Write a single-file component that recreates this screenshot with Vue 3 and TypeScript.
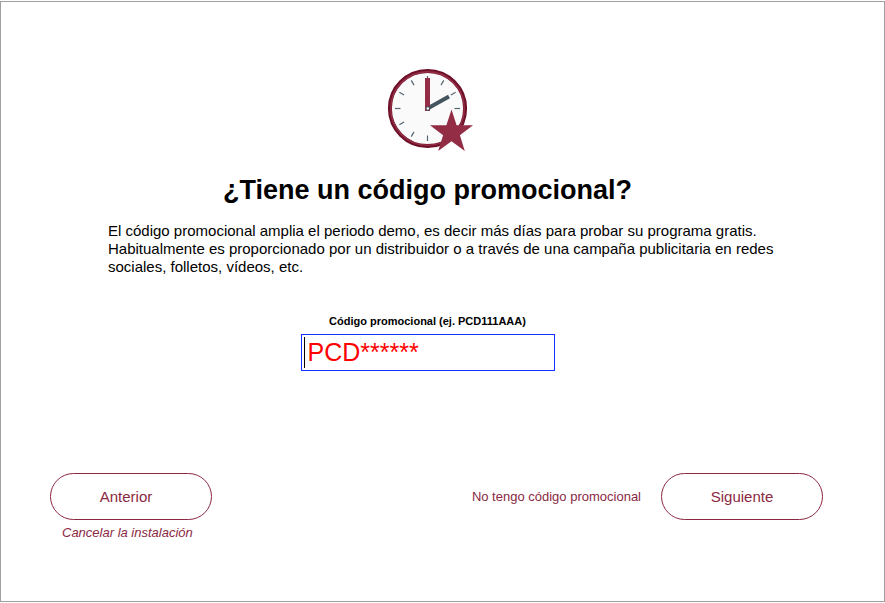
<script setup lang="ts">
import { ref } from 'vue'

const code = ref<string>('')

interface Tick {
  id: number
  angle: number
}

const ticks: Tick[] = [1, 2, 3, 6, 7, 8, 9, 10, 11, 12].map((hour) => ({
  id: hour,
  angle: hour * 30,
}))
</script>

<template>
  <main class="window">
    <section class="intro">
      <svg class="clock" viewBox="0 0 88 86" aria-hidden="true">
        <circle cx="41.5" cy="41.5" r="37.6" fill="#fafafa" stroke="#6f1029" stroke-width="4" />
        <circle cx="41.5" cy="41.5" r="36.8" fill="none" stroke="#963048" stroke-width="1.4" />
        <line
          v-for="tick in ticks"
          :key="tick.id"
          x1="41.5"
          y1="9"
          x2="41.5"
          y2="14.5"
          stroke="#566570"
          stroke-width="1.2"
          :transform="`rotate(${tick.angle} 41.5 41.5)`"
        />
        <path d="M41.5 41.5L63 29.5" stroke="#43545e" stroke-width="4" />
        <path d="M41.5 44V11" stroke="#922d45" stroke-width="5" />
        <circle cx="41.8" cy="41.5" r="2.3" fill="#43545e" />
        <circle cx="41.8" cy="41.5" r="1.2" fill="#fff" />
        <path
          d="M65.5 42.5L70.6 58.3H87L73.9 68.2L78.8 84L65.5 74.3L52.2 84L57.1 68.2L44 58.3H60.4Z"
          fill="#922d45"
        />
      </svg>
      <h1>¿Tiene un código promocional?</h1>
      <p class="description">
        El código promocional amplia el periodo demo, es decir más días para probar su programa
        gratis. Habitualmente es proporcionado por un distribuidor o a través de una campaña
        publicitaria en redes sociales, folletos, vídeos, etc.
      </p>
    </section>

    <form class="code" @submit.prevent>
      <label for="promo-code">Código promocional (ej. PCD111AAA)</label>
      <div class="field">
        <input id="promo-code" v-model="code" type="text" placeholder="PCD******" />
      </div>
    </form>

    <footer class="actions">
      <div class="back">
        <button type="button" class="pill pill-back">Anterior</button>
        <a href="#" class="cancel">Cancelar la instalación</a>
      </div>
      <div class="forward">
        <a href="#" class="skip">No tengo código promocional</a>
        <button type="button" class="pill">Siguiente</button>
      </div>
    </footer>
  </main>
</template>

<style>
body {
  background: #fff;
}
</style>

<style scoped>
.window {
  box-sizing: border-box;
  display: flex;
  flex-direction: column;
  min-height: calc(100vh - 2px);
  margin-top: 1px;
  padding: 65px 61px 60px 49px;
  border: 1px solid #a0a0a0;
  color: #000;
  font-family: "Liberation Sans", Arial, sans-serif;
}

.intro {
  display: flex;
  flex-direction: column;
  align-items: center;
  padding-right: 18px;
}

.clock {
  display: block;
  width: 88px;
  height: 86px;
  margin-left: 4px;
}

h1 {
  margin: 20px 0 0;
  font-size: 27px;
  line-height: 34px;
}

.description {
  box-sizing: border-box;
  width: 100%;
  margin: 15px 0 0;
  padding: 0 20px 0 58px;
  font-size: 15px;
  line-height: 18px;
}

.code {
  display: flex;
  flex-direction: column;
  align-items: center;
  gap: 6px;
  margin-top: 38px;
  padding-right: 18px;
}

label {
  font-size: 11px;
  font-weight: bold;
  line-height: 14px;
}

.field {
  box-sizing: border-box;
  display: flex;
  align-items: center;
  width: 254px;
  height: 37px;
  padding: 0 2px;
  border: 1px solid #1432ff;
}

.field::before {
  content: "";
  width: 1px;
  height: 31px;
  background: #000;
}

input {
  flex: 1;
  min-width: 0;
  padding: 0 3px;
  border: 0;
  outline: 0;
  background: transparent;
  color: #f00;
  font: 25px "Liberation Sans", Arial, sans-serif;
}

input::placeholder {
  color: #f00;
  opacity: 1;
}

.actions {
  display: flex;
  align-items: flex-start;
  justify-content: space-between;
  margin-top: auto;
}

.back {
  display: flex;
  flex-direction: column;
  gap: 5px;
}

.forward {
  display: flex;
  align-items: center;
  gap: 20px;
}

.pill {
  width: 162px;
  height: 47px;
  padding: 0;
  border: 1px solid #8b2942;
  border-radius: 24px;
  background: #fff;
  color: #8b2942;
  font: 15px "Liberation Sans", Arial, sans-serif;
  cursor: pointer;
}

.pill-back {
  padding-right: 10px;
}

.skip,
.cancel {
  color: #8b2942;
  font-size: 13px;
  line-height: 16px;
  text-decoration: none;
}

.cancel {
  padding-left: 12px;
  font-style: italic;
}
</style>
